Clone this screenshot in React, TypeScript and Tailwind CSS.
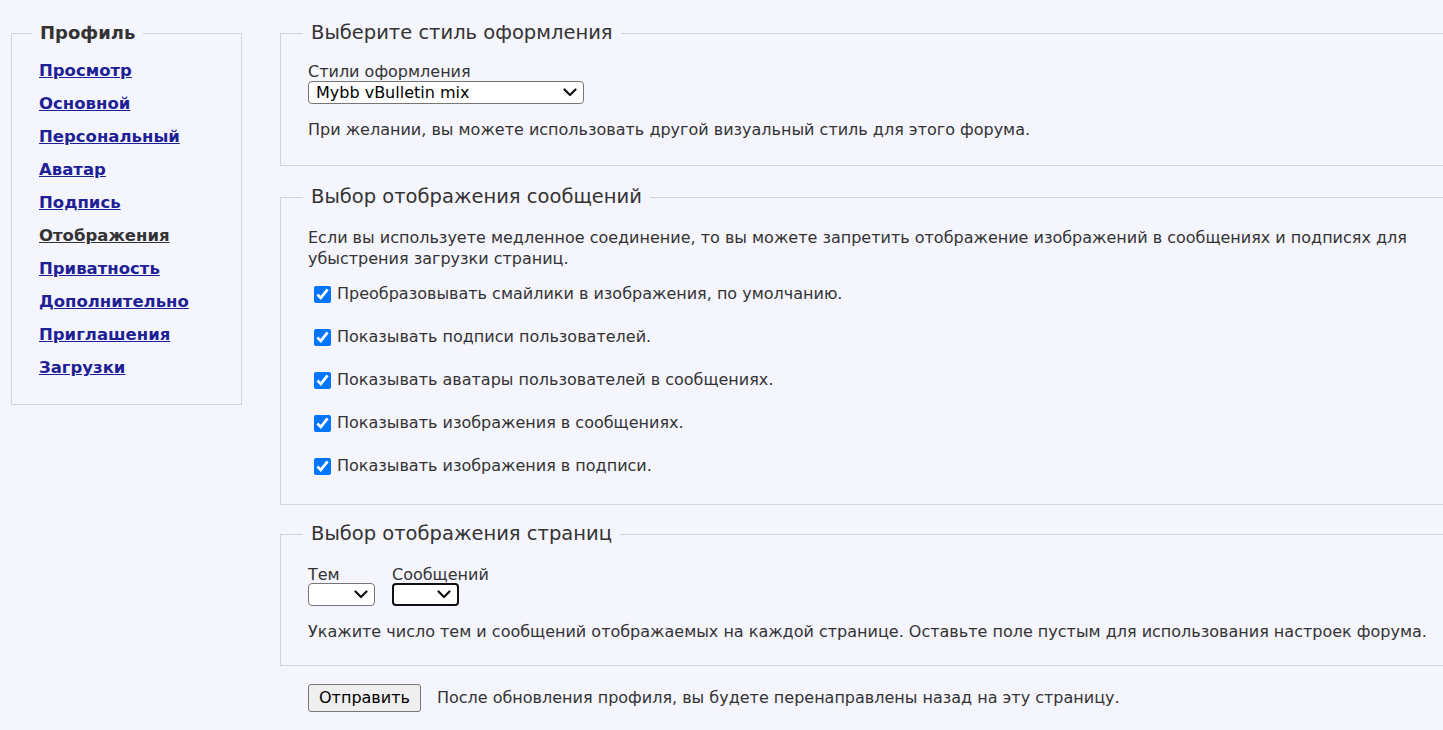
import React from "react";

const links = [
  "Просмотр",
  "Основной",
  "Персональный",
  "Аватар",
  "Подпись",
  "Отображения",
  "Приватность",
  "Дополнительно",
  "Приглашения",
  "Загрузки",
];

const options = [
  "Преобразовывать смайлики в изображения, по умолчанию.",
  "Показывать подписи пользователей.",
  "Показывать аватары пользователей в сообщениях.",
  "Показывать изображения в сообщениях.",
  "Показывать изображения в подписи.",
];

const Chevron = () => (
  <svg width="14" height="9" viewBox="0 0 14 9" className="shrink-0">
    <path d="M1.5 1.5 L7 7 L12.5 1.5" fill="none" stroke="#111" strokeWidth="2.2" strokeLinecap="round" strokeLinejoin="round" />
  </svg>
);

const FakeSelect = ({ value, className }: { value?: string; className: string }) => (
  <div className={`flex items-center justify-between rounded-[4px] bg-white pl-[7px] pr-[6px] text-[16px] text-black ${className}`}>
    <span>{value}</span>
    <Chevron />
  </div>
);

const Section = ({ title, children, extra = "" }: { title: string; children: React.ReactNode; extra?: string }) => (
  <fieldset className={`mr-[-40px] border border-[#d2d2e0] pl-[27px] pr-[40px] ${extra}`}>
    <legend className="ml-[-5px] px-[8px] text-[19.5px] leading-[24px] text-[#333]">{title}</legend>
    {children}
  </fieldset>
);

export default function App() {
  return (
    <div
      className="flex min-h-[730px] gap-[38px] overflow-hidden bg-[#f5f5fe] pl-[11px] pt-[21px] text-[16px] text-[#333]"
      style={{ fontFamily: '"DejaVu Sans", Verdana, sans-serif' }}
    >
      {/* Sidebar */}
      <div className="w-[231px] shrink-0">
        <fieldset className="border border-[#d2d2e0] pb-[26px] pl-[27px]">
          <legend className="ml-[-7px] px-[8px] text-[18px] font-bold leading-[24px] text-[#333]">Профиль</legend>
          <ul className="mt-[16px] flex flex-col gap-[13px]">
            {links.map((l) => (
              <li key={l} className="leading-[20px]">
                <a
                  href="#"
                  className={`text-[16.5px] font-bold underline ${l === "Отображения" ? "text-[#333]" : "text-[#1f1f96]"}`}
                >
                  {l}
                </a>
              </li>
            ))}
          </ul>
        </fieldset>
      </div>

      {/* Main */}
      <div className="flex min-w-0 flex-1 flex-col">
        <Section title="Выберите стиль оформления" extra="pb-[25px]">
          <div className="mt-[18px] leading-[18px]">Стили оформления</div>
          <FakeSelect value="Mybb vBulletin mix" className="h-[23px] w-[276px] border border-[#767676]" />
          <p className="mt-[16px] leading-[20px]">При желании, вы можете использовать другой визуальный стиль для этого форума.</p>
        </Section>

        <div className="mt-[19px]">
          <Section title="Выбор отображения сообщений" extra="pb-[28px]">
            <p className="mt-[18px] leading-[21px]">
              Если вы используете медленное соединение, то вы можете запретить отображение изображений в сообщениях и подписях для
              убыстрения загрузки страниц.
            </p>
            <div className="mt-[15px] flex flex-col gap-[23px]">
              {options.map((o) => (
                <label key={o} className="flex items-center gap-[6px] leading-[20px]">
                  <input type="checkbox" defaultChecked className="ml-[6px] h-[17px] w-[17px] accent-[#0075ff]" />
                  <span>{o}</span>
                </label>
              ))}
            </div>
          </Section>
        </div>

        <div className="mt-[17px]">
          <Section title="Выбор отображения страниц" extra="pb-[23px]">
            <div className="mt-[20px] flex gap-[17px]">
              <div>
                <div className="leading-[17px]">Тем</div>
                <FakeSelect className="h-[23px] w-[67px] border border-[#767676]" />
              </div>
              <div>
                <div className="leading-[17px]">Сообщений</div>
                <FakeSelect className="h-[23px] w-[67px] border-2 border-[#101010]" />
              </div>
            </div>
            <p className="mt-[16px] leading-[20px]">
              Укажите число тем и сообщений отображаемых на каждой странице. Оставьте поле пустым для использования настроек форума.
            </p>
          </Section>
        </div>

        <div className="mt-[18px] flex items-center gap-[16px] pl-[28px]">
          <button className="h-[28px] rounded-[3px] border border-[#767676] bg-[#efefef] px-[10px] text-[16px] text-black">
            Отправить
          </button>
          <span>После обновления профиля, вы будете перенаправлены назад на эту страницу.</span>
        </div>
      </div>
    </div>
  );
}
